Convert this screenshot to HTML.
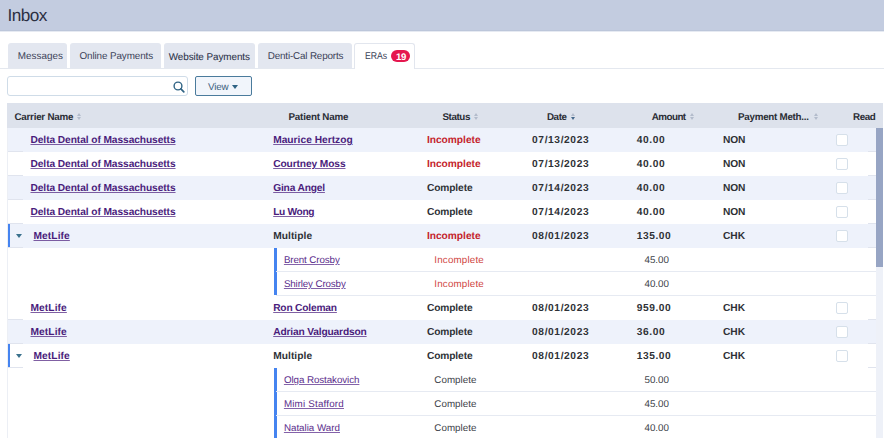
<!DOCTYPE html>
<html lang="en">
<head>
<meta charset="utf-8">
<title>Inbox</title>
<style>
*{box-sizing:border-box;margin:0;padding:0}
html,body{width:884px;height:438px;overflow:hidden;background:#fff}
body{font-family:"Liberation Sans",sans-serif;text-rendering:geometricPrecision;font-size:10.2px;color:#333;position:relative}
.hdr{position:absolute;left:0;top:0;width:884px;height:32px;background:#c3cce0;border-bottom:1px solid #e6eaf2;box-shadow:inset 0 -1px 0 #bcc6da}
.hdr h1{position:absolute;left:7.5px;top:5.4px;font-size:17.2px;line-height:20px;font-weight:400;color:#2b2f42;white-space:nowrap}
.tabline{position:absolute;left:0;top:68px;width:884px;height:1px;background:#e4e8ef}
.tab{position:absolute;top:43px;height:25px;background:#e3e7f0;border-radius:3px 3px 0 0;font-size:9.9px;line-height:25px;text-align:center;color:#3b4258;white-space:nowrap}
.tab.on{background:#fff;border:1px solid #e2e6ee;border-bottom:none;height:26px;text-align:left}
.tab span{position:absolute;top:1.4px}
.tab.on span{left:10px;top:0.2px}
.badge{position:absolute;left:36px;top:6px;width:19.2px;height:12px;background:#e5174f;color:#fff;font-weight:700;font-size:9.6px;line-height:15.6px;border-radius:6px;text-align:center;letter-spacing:-.3px;padding-left:.8px}
.search{position:absolute;left:7px;top:76px;width:181px;height:20px;border:1px solid #cfdce8;border-radius:3px;background:#fff}
.search svg{position:absolute;left:165px;top:4px}
.view{position:absolute;left:195px;top:76px;width:57px;height:20px;border:1px solid #4a7b9c;border-radius:2px;background:#f1f5fb;font-size:9.9px;line-height:18px;color:#3d627f}
.view span{position:absolute;left:12px;top:1.5px}
.view i{position:absolute;left:36.3px;top:8.4px;width:0;height:0;border-left:3.5px solid transparent;border-right:3.5px solid transparent;border-top:4.1px solid #2f6384}
.grid{position:absolute;left:7px;top:103px;width:877px;height:335px}
.th{position:absolute;left:0;top:0;width:875.5px;height:25px;background:#dde2ec}
.th span{position:absolute;top:1.7px;line-height:25px;font-weight:700;font-size:9.8px;color:#2a2d35;white-space:nowrap}
.so{position:absolute;top:10px;width:5px;height:7px}
.so:before,.so:after{content:"";position:absolute;left:0;width:0;height:0;border-left:2.5px solid transparent;border-right:2.5px solid transparent}
.so:before{top:0;border-bottom:3px solid #b3bccc}
.so:after{top:4px;border-top:3px solid #b3bccc}
.so.d:after{border-top-color:#46698c}
.r{position:absolute;left:0;width:869px;height:24px;font-weight:700;font-size:10.2px;line-height:24px;color:#2e3136}
.r.alt{background:#eef2fb}
.r span,.r a{position:absolute;top:1px;white-space:nowrap}
.r a{color:#4a1c7c;text-decoration:underline;text-decoration-color:rgba(74,28,124,.7);text-underline-offset:1.2px;text-decoration-thickness:1px}
.r .inc{color:#c4232b}
.r.sub{font-weight:400;font-size:9.8px;color:#40434a}
.r.sub span,.r.sub a{top:1px}
.r.sub .inc{color:#d0463f}
.r.sub a{color:#5b2e8c;text-decoration-color:rgba(91,46,140,.75)}
.cb{position:absolute;left:829px;top:6.3px;width:12px;height:12px;border:1px solid #d6e0ea;border-radius:2px;background:#fff}
.bar{position:absolute;left:.2px;top:0;width:2.8px;height:24px;background:#4584f0}
.car{position:absolute;left:9px;top:10.2px;width:0;height:0;border-left:3.3px solid transparent;border-right:3.3px solid transparent;border-top:4.2px solid #3a718d}
.fc{position:absolute;left:0;top:23px;width:16px;height:1px;background:#e0e4ee}
.lc{position:absolute;left:861px;top:23px;width:8px;height:1px;background:#e0e4ee}
.sbar{position:absolute;left:266.5px;width:3.4px;background:#4584f0}
.ln{position:absolute;height:1px;background:#e6eaf2}
.gl{position:absolute;left:0;top:25px;width:1px;height:310px;background:#eceff5}
.sc{position:absolute;left:876px;top:128px;width:6.5px;height:310px;background:#eef1f8}
.sc i{position:absolute;left:0;top:0;width:6.5px;height:139px;background:#97a5c4}
</style>
</head>
<body>
<div class="hdr"><h1 style="letter-spacing:-0.537px">Inbox</h1></div>
<div class="tab" style="left:7.7px;width:59.2px"><span style="left:10.1px;top:1.4px;letter-spacing:0.012px">Messages</span></div>
<div class="tab" style="left:70.3px;width:90.6px"><span style="left:9.2px;top:1.4px;letter-spacing:-0.115px">Online Payments</span></div>
<div class="tab" style="left:164px;width:91px"><span style="left:4.7px;top:2.4px;letter-spacing:-0.057px;color:#2c3249;-webkit-text-stroke:.08px #2c3249">Website Payments</span></div>
<div class="tab" style="left:257.7px;width:94.2px"><span style="left:10.1px;top:1.4px;letter-spacing:-0.18px">Denti-Cal Reports</span></div>
<div class="tab on" style="left:354px;width:61px"><span style="transform:scaleX(.88);transform-origin:0 50%">ERAs</span><div class="badge">19</div></div>
<div class="tabline" style="left:0;width:354px"></div><div class="tabline" style="left:415px;width:469px"></div>
<div class="search"><svg width="12" height="12" viewBox="0 0 12 12"><circle cx="5" cy="5" r="3.9" fill="none" stroke="#2f6384" stroke-width="1.4"/><path d="M7.9 7.9L10.8 10.8" stroke="#2f6384" stroke-width="1.7" stroke-linecap="round"/></svg></div>
<div class="view"><span style="letter-spacing:-.2px">View</span><i></i></div>
<div class="grid">
<div class="th">
<span style="left:7.5px;letter-spacing:-0.241px">Carrier Name</span>
<b class="so" style="left:69.8px"></b>
<span style="left:281.5px;letter-spacing:-0.198px">Patient Name</span>
<span style="left:435.5px;letter-spacing:-0.411px">Status</span>
<b class="so" style="left:466.8px"></b>
<span style="left:539.9px;letter-spacing:-0.383px">Date</span>
<b class="so d" style="left:563.5px"></b>
<span style="left:644.8px;letter-spacing:-0.543px">Amount</span>
<b class="so" style="left:682.6px"></b>
<span style="left:731.1px;letter-spacing:-0.264px">Payment Meth...</span>
<b class="so" style="left:807.2px"></b>
<span style="left:846.1px;letter-spacing:-0.423px">Read</span>
</div>
<div class="r alt" style="top:25px"><a style="left:23.5px;letter-spacing:-0.075px">Delta Dental of Massachusetts</a><a style="left:266.2px;letter-spacing:0.017px">Maurice Hertzog</a><span class="inc" style="left:419.9px;letter-spacing:-0.009px">Incomplete</span><span style="left:525.1px;letter-spacing:0.611px">07/13/2023</span><span style="left:629.8px;letter-spacing:0.6px">40.00</span><span style="left:716.1px;letter-spacing:-0.22px">NON</span><div class="cb"></div><div class="fc"></div><div class="lc"></div></div>
<div class="r" style="top:49px"><a style="left:23.5px;letter-spacing:-0.075px">Delta Dental of Massachusetts</a><a style="left:266.2px;letter-spacing:-0.099px">Courtney Moss</a><span class="inc" style="left:419.9px;letter-spacing:-0.009px">Incomplete</span><span style="left:525.1px;letter-spacing:0.611px">07/13/2023</span><span style="left:629.8px;letter-spacing:0.6px">40.00</span><span style="left:716.1px;letter-spacing:-0.22px">NON</span><div class="cb"></div><div class="fc"></div><div class="lc"></div></div>
<div class="r alt" style="top:73px"><a style="left:23.5px;letter-spacing:-0.075px">Delta Dental of Massachusetts</a><a style="left:266.2px;letter-spacing:-0.167px">Gina Angel</a><span style="left:419.9px;letter-spacing:-0.103px">Complete</span><span style="left:525.1px;letter-spacing:0.611px">07/14/2023</span><span style="left:629.8px;letter-spacing:0.6px">40.00</span><span style="left:716.1px;letter-spacing:-0.22px">NON</span><div class="cb"></div><div class="fc"></div><div class="lc"></div></div>
<div class="r" style="top:97px"><a style="left:23.5px;letter-spacing:-0.075px">Delta Dental of Massachusetts</a><a style="left:266.2px;letter-spacing:-0.332px">Lu Wong</a><span style="left:419.9px;letter-spacing:-0.103px">Complete</span><span style="left:525.1px;letter-spacing:0.611px">07/14/2023</span><span style="left:629.8px;letter-spacing:0.6px">40.00</span><span style="left:716.1px;letter-spacing:-0.22px">NON</span><div class="cb"></div><div class="fc"></div><div class="lc"></div></div>
<div class="r alt" style="top:121px"><div class="bar"></div><div class="car"></div><a style="left:26.5px;letter-spacing:0.1px">MetLife</a><span style="left:266.2px;letter-spacing:0.059px">Multiple</span><span class="inc" style="left:419.9px;letter-spacing:-0.009px">Incomplete</span><span style="left:525.1px;letter-spacing:0.611px">08/01/2023</span><span style="left:629.8px;letter-spacing:0.546px">135.00</span><span style="left:716.1px;letter-spacing:-0.089px">CHK</span><div class="cb"></div><div class="fc"></div><div class="lc"></div></div>
<div class="r sub" style="top:145px"><a style="left:276.9px;letter-spacing:-0.116px">Brent Crosby</a><span class="inc" style="left:427.3px;letter-spacing:0.174px">Incomplete</span><span style="left:637.5px;letter-spacing:-0.033px">45.00</span></div>
<div class="r sub" style="top:169px"><a style="left:276.9px;letter-spacing:-0.139px">Shirley Crosby</a><span class="inc" style="left:427.3px;letter-spacing:0.174px">Incomplete</span><span style="left:637.5px;letter-spacing:-0.033px">40.00</span></div>
<div class="r" style="top:193px"><a style="left:23.5px;letter-spacing:0.1px">MetLife</a><a style="left:266.2px;letter-spacing:-0.177px">Ron Coleman</a><span style="left:419.9px;letter-spacing:-0.103px">Complete</span><span style="left:525.1px;letter-spacing:0.611px">08/01/2023</span><span style="left:629.8px;letter-spacing:0.546px">959.00</span><span style="left:716.1px;letter-spacing:-0.089px">CHK</span><div class="cb"></div><div class="fc"></div><div class="lc"></div></div>
<div class="r alt" style="top:217px"><a style="left:23.5px;letter-spacing:0.1px">MetLife</a><a style="left:266.2px;letter-spacing:-0.155px">Adrian Valguardson</a><span style="left:419.9px;letter-spacing:-0.103px">Complete</span><span style="left:525.1px;letter-spacing:0.611px">08/01/2023</span><span style="left:629.8px;letter-spacing:0.6px">36.00</span><span style="left:716.1px;letter-spacing:-0.089px">CHK</span><div class="cb"></div><div class="fc"></div><div class="lc"></div></div>
<div class="r" style="top:241px"><div class="bar"></div><div class="car"></div><a style="left:26.5px;letter-spacing:0.1px">MetLife</a><span style="left:266.2px;letter-spacing:0.059px">Multiple</span><span style="left:419.9px;letter-spacing:-0.103px">Complete</span><span style="left:525.1px;letter-spacing:0.611px">08/01/2023</span><span style="left:629.8px;letter-spacing:0.546px">135.00</span><span style="left:716.1px;letter-spacing:-0.089px">CHK</span><div class="cb"></div><div class="fc"></div><div class="lc"></div></div>
<div class="r sub" style="top:265px"><a style="left:276.9px;letter-spacing:-0.079px">Olga Rostakovich</a><span style="left:427.3px;letter-spacing:0.037px">Complete</span><span style="left:637.5px;letter-spacing:-0.033px">50.00</span></div>
<div class="r sub" style="top:289px"><a style="left:276.9px;letter-spacing:0.197px">Mimi Stafford</a><span style="left:427.3px;letter-spacing:0.037px">Complete</span><span style="left:637.5px;letter-spacing:-0.033px">45.00</span></div>
<div class="r sub" style="top:313px"><a style="left:276.9px;letter-spacing:-0.015px">Natalia Ward</a><span style="left:427.3px;letter-spacing:0.037px">Complete</span><span style="left:637.5px;letter-spacing:-0.033px">40.00</span></div>
<div class="gl"></div>
<div class="sbar" style="top:145px;height:47px"></div>
<div class="sbar" style="top:264.5px;height:73px"></div>
<div class="ln" style="left:269px;top:168px;width:600px"></div>
<div class="ln" style="left:269px;top:192px;width:600px"></div>
<div class="ln" style="left:269px;top:288px;width:600px"></div>
<div class="ln" style="left:269px;top:312px;width:600px"></div>
</div>
<div class="sc"><i></i></div>
</body>
</html>
